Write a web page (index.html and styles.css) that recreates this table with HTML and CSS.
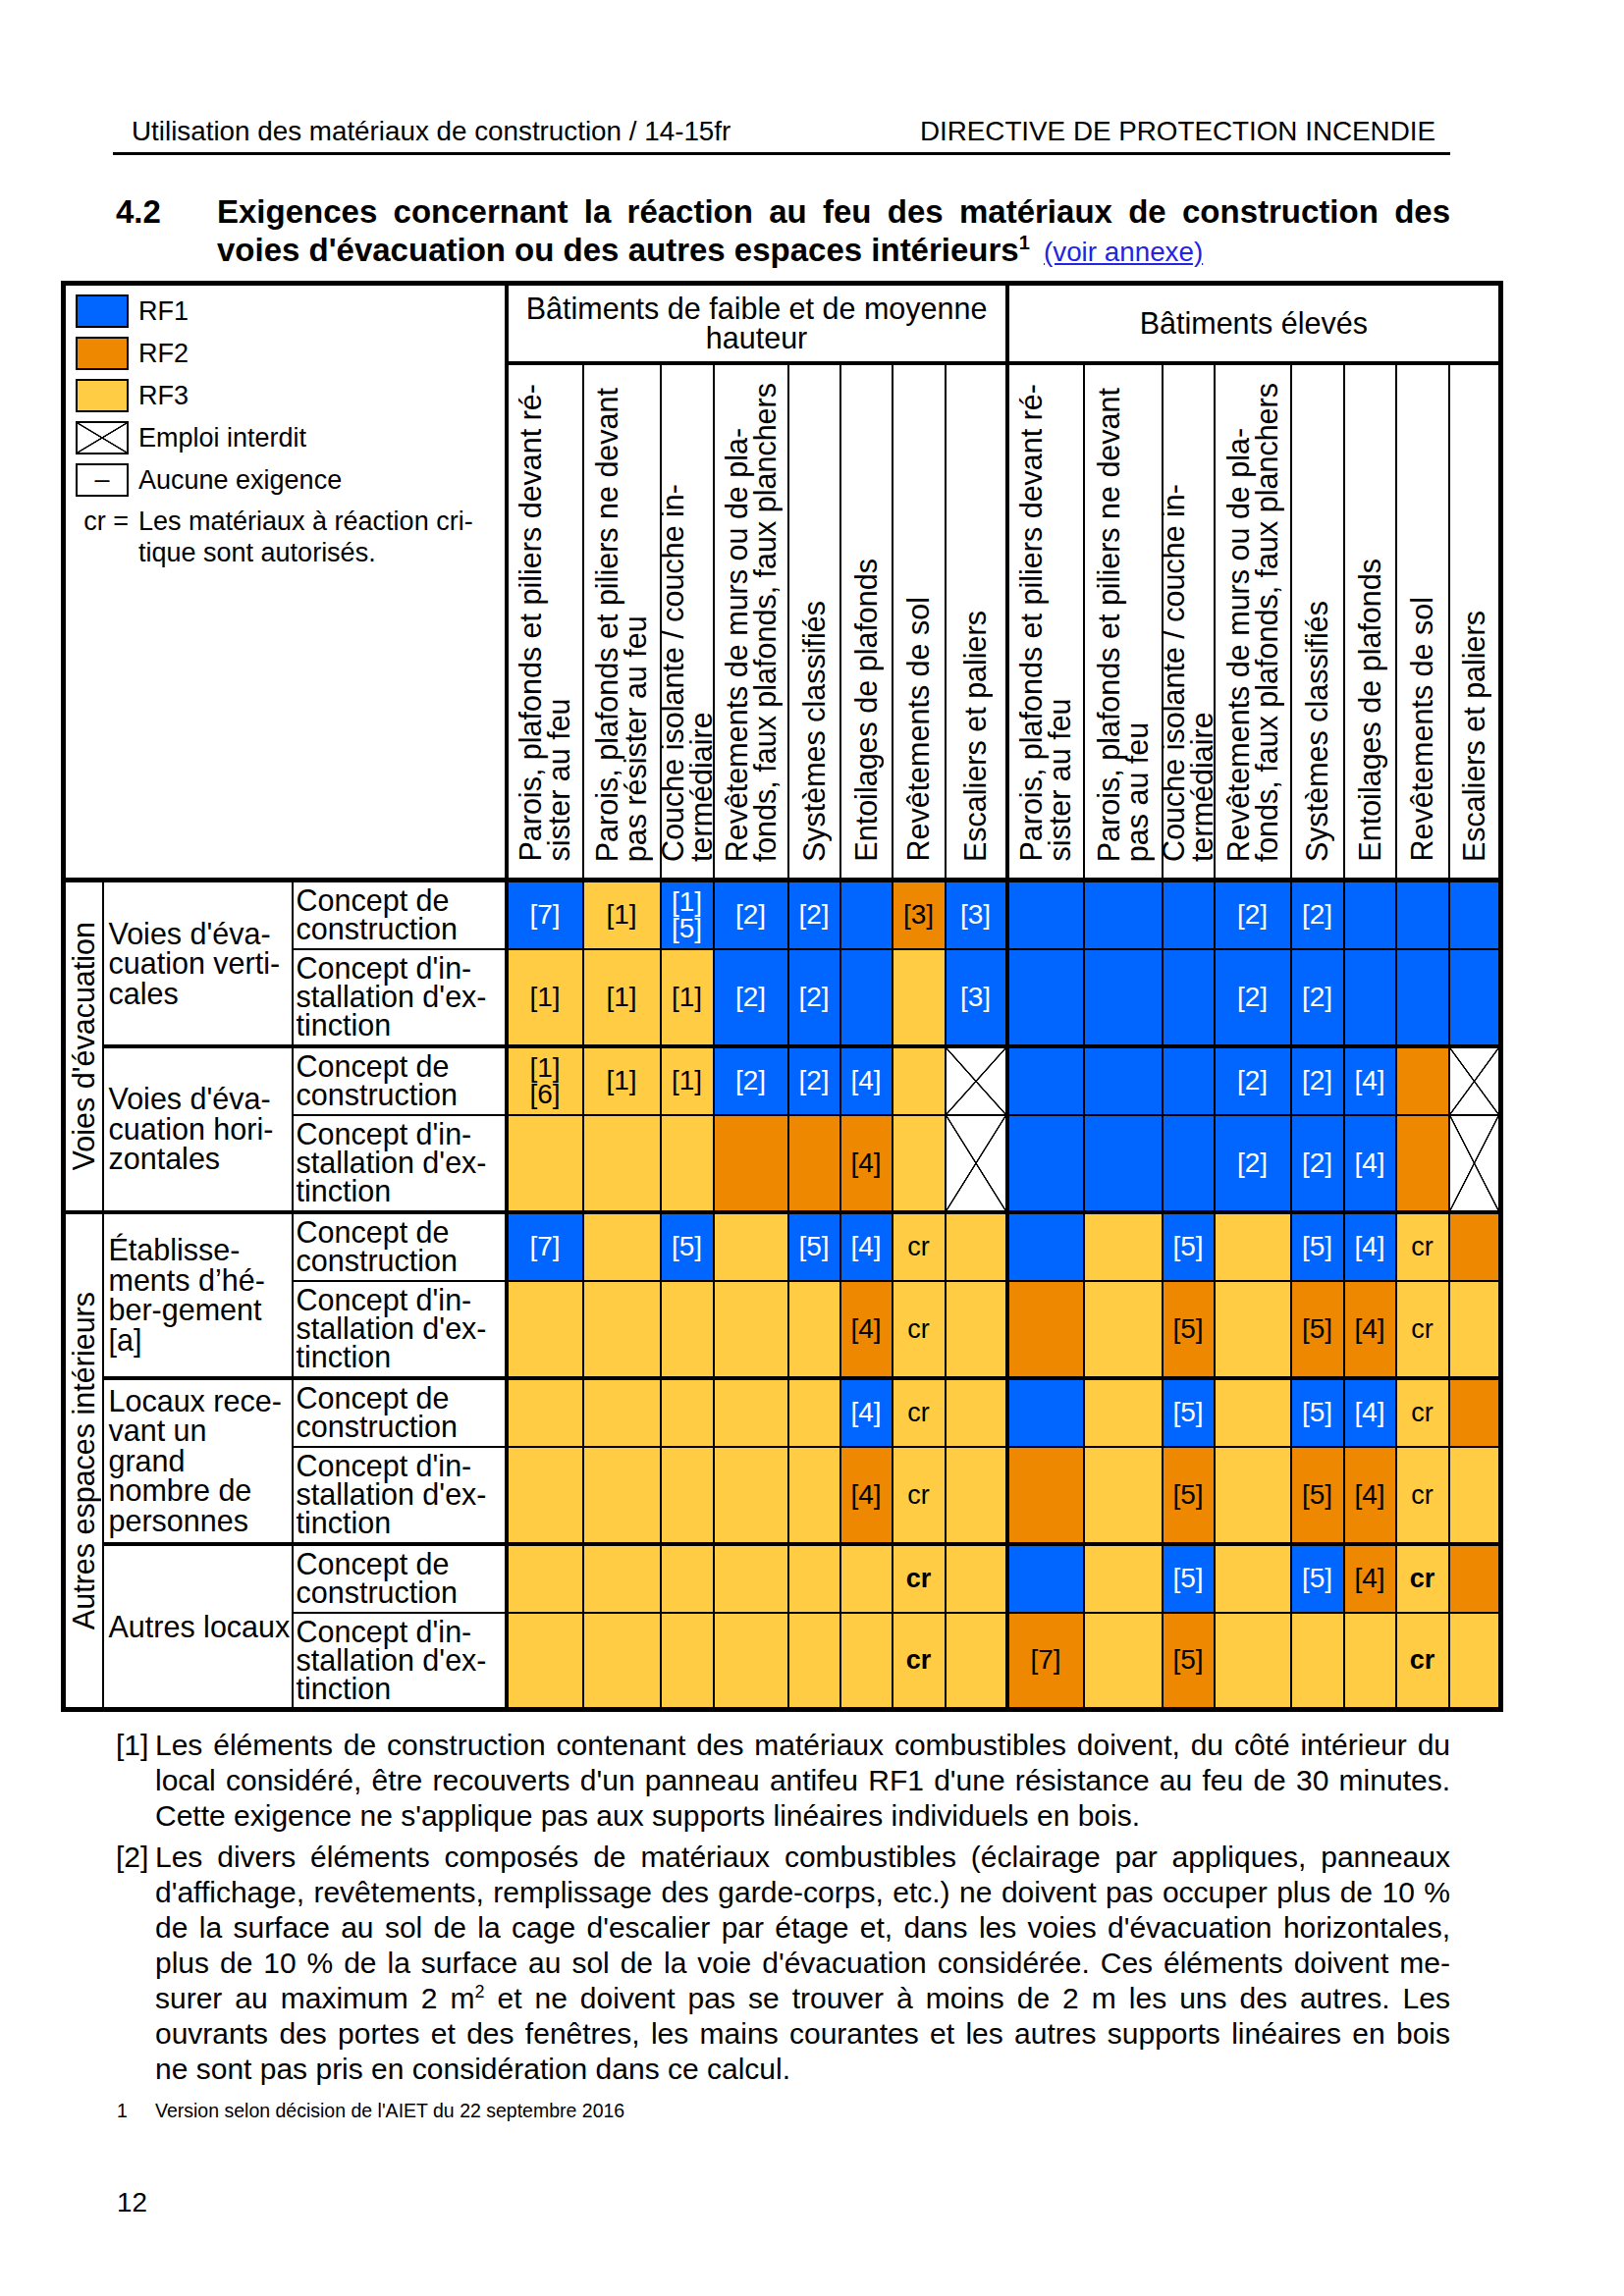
FILE: index.html
```html
<!DOCTYPE html>
<html lang="fr">
<head>
  <meta charset="UTF-8">
  <title>Utilisation des matériaux de construction - 4.2</title>
  <link rel="stylesheet" href="styles.css">
</head>
<body>
  <div class="page">
    <header class="doc-header">
      <span>Utilisation des matériaux de construction / 14-15fr</span>
      <span>DIRECTIVE DE PROTECTION INCENDIE</span>
    </header>

    <h2 class="section-title">
      <span class="num">4.2</span>
      <span class="text"><span class="jl">Exigences concernant la réaction au feu des matériaux de construction des</span>voies d'évacuation ou des autres espaces intérieurs<sup>1</sup> <a href="#annexe">(voir annexe)</a></span>
    </h2>

    <table class="req">
      <colgroup>
        <col style="width:40px"><col style="width:193px"><col style="width:218px">
        <col style="width:78px"><col style="width:79px"><col style="width:54px"><col style="width:76px">
        <col style="width:53px"><col style="width:53px"><col style="width:54px"><col style="width:63px">
        <col style="width:78px"><col style="width:80px"><col style="width:53px"><col style="width:78px">
        <col style="width:54px"><col style="width:53px"><col style="width:54px"><col style="width:53px">
      </colgroup>
      <thead>
        <tr class="h-top">
          <th class="legend-cell" rowspan="2" colspan="3">
            <div class="legend">
              <span class="sw b"></span><span>RF1</span>
              <span class="sw o"></span><span>RF2</span>
              <span class="sw y"></span><span>RF3</span>
              <span class="sw x"></span><span>Emploi interdit</span>
              <span class="sw none">–</span><span>Aucune exigence</span>
              <span class="cr-key">cr =</span><span class="cr-text">Les matériaux à réaction cri-<br>tique sont autorisés.</span>
            </div>
          </th>
          <th class="bld" colspan="8">Bâtiments de faible et de moyenne<br>hauteur</th>
          <th class="bld gs" colspan="8">Bâtiments élevés</th>
        </tr>
        <tr class="h-cols">
          <th><div class="vh"><span>Parois, plafonds et piliers devant ré-<br>sister au feu</span></div></th>
          <th><div class="vh"><span>Parois, plafonds et piliers ne devant<br>pas résister au feu</span></div></th>
          <th><div class="vh"><span>Couche isolante / couche in-<br>termédiaire</span></div></th>
          <th><div class="vh"><span>Revêtements de murs ou de pla-<br>fonds, faux plafonds, faux planchers</span></div></th>
          <th><div class="vh"><span>Systèmes classifiés</span></div></th>
          <th><div class="vh"><span>Entoilages de plafonds</span></div></th>
          <th><div class="vh"><span>Revêtements de sol</span></div></th>
          <th><div class="vh"><span>Escaliers et paliers</span></div></th>
          <th class="gs"><div class="vh"><span>Parois, plafonds et piliers devant ré-<br>sister au feu</span></div></th>
          <th><div class="vh"><span>Parois, plafonds et piliers ne devant<br>pas au feu</span></div></th>
          <th><div class="vh"><span>Couche isolante / couche in-<br>termédiaire</span></div></th>
          <th><div class="vh"><span>Revêtements de murs ou de pla-<br>fonds, faux plafonds, faux planchers</span></div></th>
          <th><div class="vh"><span>Systèmes classifiés</span></div></th>
          <th><div class="vh"><span>Entoilages de plafonds</span></div></th>
          <th><div class="vh"><span>Revêtements de sol</span></div></th>
          <th><div class="vh"><span>Escaliers et paliers</span></div></th>
        </tr>
      </thead>
      <tbody>
        <tr class="rc">
          <td class="sec-label" rowspan="4"><span class="vt">Voies d'évacuation</span></td>
          <td class="grp-label" rowspan="2">Voies d'éva-<br>cuation verti-<br>cales</td>
          <td class="sub">Concept de<br>construction</td>
          <td class="b">[7]</td><td class="y">[1]</td><td class="b two">[1]<br>[5]</td><td class="b">[2]</td>
          <td class="b">[2]</td><td class="b"></td><td class="o">[3]</td><td class="b">[3]</td>
          <td class="b gs"></td><td class="b"></td><td class="b"></td><td class="b">[2]</td>
          <td class="b">[2]</td><td class="b"></td><td class="b"></td><td class="b"></td>
        </tr>
        <tr class="ri">
          <td class="sub">Concept d'in-<br>stallation d'ex-<br>tinction</td>
          <td class="y">[1]</td><td class="y">[1]</td><td class="y">[1]</td><td class="b">[2]</td>
          <td class="b">[2]</td><td class="b"></td><td class="y"></td><td class="b">[3]</td>
          <td class="b gs"></td><td class="b"></td><td class="b"></td><td class="b">[2]</td>
          <td class="b">[2]</td><td class="b"></td><td class="b"></td><td class="b"></td>
        </tr>
        <tr class="rc grp">
          <td class="grp-label" rowspan="2">Voies d'éva-<br>cuation hori-<br>zontales</td>
          <td class="sub">Concept de<br>construction</td>
          <td class="y two">[1]<br>[6]</td><td class="y">[1]</td><td class="y">[1]</td><td class="b">[2]</td>
          <td class="b">[2]</td><td class="b">[4]</td><td class="y"></td><td class="x"></td>
          <td class="b gs"></td><td class="b"></td><td class="b"></td><td class="b">[2]</td>
          <td class="b">[2]</td><td class="b">[4]</td><td class="o"></td><td class="x"></td>
        </tr>
        <tr class="ri">
          <td class="sub">Concept d'in-<br>stallation d'ex-<br>tinction</td>
          <td class="y"></td><td class="y"></td><td class="y"></td><td class="o"></td>
          <td class="o"></td><td class="o">[4]</td><td class="y"></td><td class="x"></td>
          <td class="b gs"></td><td class="b"></td><td class="b"></td><td class="b">[2]</td>
          <td class="b">[2]</td><td class="b">[4]</td><td class="o"></td><td class="x"></td>
        </tr>
        <tr class="rc grp">
          <td class="sec-label" rowspan="6"><span class="vt">Autres espaces intérieurs</span></td>
          <td class="grp-label" rowspan="2">Établisse-<br>ments d’hé-<br>ber-gement<br>[a]</td>
          <td class="sub">Concept de<br>construction</td>
          <td class="b">[7]</td><td class="y"></td><td class="b">[5]</td><td class="y"></td>
          <td class="b">[5]</td><td class="b">[4]</td><td class="y cr">cr</td><td class="y"></td>
          <td class="b gs"></td><td class="y"></td><td class="b">[5]</td><td class="y"></td>
          <td class="b">[5]</td><td class="b">[4]</td><td class="y cr">cr</td><td class="o"></td>
        </tr>
        <tr class="ri">
          <td class="sub">Concept d'in-<br>stallation d'ex-<br>tinction</td>
          <td class="y"></td><td class="y"></td><td class="y"></td><td class="y"></td>
          <td class="y"></td><td class="o">[4]</td><td class="y cr">cr</td><td class="y"></td>
          <td class="o gs"></td><td class="y"></td><td class="o">[5]</td><td class="y"></td>
          <td class="o">[5]</td><td class="o">[4]</td><td class="y cr">cr</td><td class="y"></td>
        </tr>
        <tr class="rc grp">
          <td class="grp-label" rowspan="2">Locaux rece-<br>vant un<br>grand<br>nombre de<br>personnes</td>
          <td class="sub">Concept de<br>construction</td>
          <td class="y"></td><td class="y"></td><td class="y"></td><td class="y"></td>
          <td class="y"></td><td class="b">[4]</td><td class="y cr">cr</td><td class="y"></td>
          <td class="b gs"></td><td class="y"></td><td class="b">[5]</td><td class="y"></td>
          <td class="b">[5]</td><td class="b">[4]</td><td class="y cr">cr</td><td class="o"></td>
        </tr>
        <tr class="ri">
          <td class="sub">Concept d'in-<br>stallation d'ex-<br>tinction</td>
          <td class="y"></td><td class="y"></td><td class="y"></td><td class="y"></td>
          <td class="y"></td><td class="o">[4]</td><td class="y cr">cr</td><td class="y"></td>
          <td class="o gs"></td><td class="y"></td><td class="o">[5]</td><td class="y"></td>
          <td class="o">[5]</td><td class="o">[4]</td><td class="y cr">cr</td><td class="y"></td>
        </tr>
        <tr class="rc grp">
          <td class="grp-label" rowspan="2">Autres locaux</td>
          <td class="sub">Concept de<br>construction</td>
          <td class="y"></td><td class="y"></td><td class="y"></td><td class="y"></td>
          <td class="y"></td><td class="y"></td><td class="y cr strong">cr</td><td class="y"></td>
          <td class="b gs"></td><td class="y"></td><td class="b">[5]</td><td class="y"></td>
          <td class="b">[5]</td><td class="o">[4]</td><td class="y cr strong">cr</td><td class="o"></td>
        </tr>
        <tr class="ri">
          <td class="sub">Concept d'in-<br>stallation d'ex-<br>tinction</td>
          <td class="y"></td><td class="y"></td><td class="y"></td><td class="y"></td>
          <td class="y"></td><td class="y"></td><td class="y cr strong">cr</td><td class="y"></td>
          <td class="o gs">[7]</td><td class="y"></td><td class="o">[5]</td><td class="y"></td>
          <td class="y"></td><td class="y"></td><td class="y cr strong">cr</td><td class="y"></td>
        </tr>
      </tbody>
    </table>

    <div class="notes">
      <div class="note">
        <span class="ref">[1]</span>
        <p class="body"><span class="jl">Les éléments de construction contenant des matériaux combustibles doivent, du côté intérieur du</span><span class="jl">local considéré, être recouverts d'un panneau antifeu RF1 d'une résistance au feu de 30 minutes.</span>Cette exigence ne s'applique pas aux supports linéaires individuels en bois.</p>
      </div>
      <div class="note">
        <span class="ref">[2]</span>
        <p class="body"><span class="jl">Les divers éléments composés de matériaux combustibles (éclairage par appliques, panneaux</span><span class="jl">d'affichage, revêtements, remplissage des garde-corps, etc.) ne doivent pas occuper plus de 10&nbsp;%</span><span class="jl">de la surface au sol de la cage d'escalier par étage et, dans les voies d'évacuation horizontales,</span><span class="jl">plus de 10&nbsp;% de la surface au sol de la voie d'évacuation considérée. Ces éléments doivent me-</span><span class="jl">surer au maximum 2 m<sup>2</sup> et ne doivent pas se trouver à moins de 2 m les uns des autres. Les</span><span class="jl">ouvrants des portes et des fenêtres, les mains courantes et les autres supports linéaires en bois</span>ne sont pas pris en considération dans ce calcul.</p>
      </div>
    </div>

    <div class="footnote">
      <span class="ref">1</span>
      <span>Version selon décision de l'AIET du 22 septembre 2016</span>
    </div>

    <div class="page-num">12</div>
  </div>
</body>
</html>
```

FILE: styles.css
```css
body {
  margin: 0;
  background: #fff;
  color: #000;
  font-family: "Liberation Sans", Arial, Helvetica, sans-serif;
}
.page {
  width: 1654px;
}

/* running header */
.doc-header {
  display: flex;
  justify-content: space-between;
  box-sizing: border-box;
  width: 1362px;
  margin: 118px 0 0 115px;
  padding: 0 15px 5px 19px;
  border-bottom: 3px solid #000;
  font-size: 27.8px;
  line-height: 32px;
}

/* section title */
.section-title {
  display: flex;
  width: 1359px;
  margin: 38px 0 0 118px;
  font-size: 33px;
  line-height: 39px;
  font-weight: bold;
}
.section-title .num {
  flex: none;
  width: 103px;
}
.section-title .text {
  flex: 1;
}
.section-title sup {
  font-size: 20px;
  line-height: 0;
}
.section-title a {
  margin-left: 5px;
  font-weight: normal;
  font-size: 27.8px;
  color: #2323e0;
  text-decoration: underline;
}
.jl {
  display: block;
  white-space: nowrap;
  text-align: justify;
  text-align-last: justify;
}

/* requirements table */
.req {
  border-collapse: collapse;
  table-layout: fixed;
  width: 1469px;
  margin: 10px 0 0 62px;
  border: 5px solid #000;
  font-size: 30.5px;
}
.req th,
.req td {
  border: 2px solid #000;
  padding: 0;
  font-weight: normal;
  white-space: nowrap;
}
.req .gs {
  border-left-width: 4px;
}
.req .h-top {
  height: 81px;
}
.req .h-cols {
  height: 527px;
}
.req .h-cols th {
  border-bottom-width: 5px;
  vertical-align: bottom;
}
.req .bld {
  border-bottom-width: 4px;
  line-height: 30px;
  text-align: center;
  vertical-align: middle;
}
.req .rc {
  height: 70px;
}
.req .ri {
  height: 99px;
}
.req tr.grp > td {
  border-top-width: 4px;
}

/* legend */
.legend-cell {
  border-right-width: 4px !important;
  border-bottom-width: 5px !important;
  vertical-align: top;
  text-align: left;
}
.legend {
  display: grid;
  grid-template-columns: 54px auto;
  column-gap: 10px;
  row-gap: 9px;
  align-items: center;
  padding: 9px 0 0 10px;
  font-size: 27px;
  line-height: 32px;
}
.sw {
  box-sizing: border-box;
  height: 34px;
  border: 2px solid #000;
}
.sw.none {
  background: #fff;
  text-align: center;
  line-height: 28px;
}
.cr-key {
  align-self: start;
  text-align: right;
}
.cr-text {
  align-self: start;
}

/* rotated column headers */
.vh {
  display: flex;
  justify-content: center;
  align-items: flex-end;
  padding-bottom: 16px;
}
.vh span {
  writing-mode: vertical-rl;
  transform: rotate(180deg);
  line-height: 29px;
  text-align: left;
}

/* row labels */
.sec-label {
  text-align: center;
  vertical-align: middle;
}
.vt {
  display: inline-block;
  writing-mode: vertical-rl;
  transform: rotate(180deg);
  line-height: 34px;
  vertical-align: middle;
}
.grp-label {
  padding-left: 5px !important;
  line-height: 30.5px;
  vertical-align: middle;
}
.sub {
  padding-left: 3px !important;
  border-right-width: 4px !important;
  line-height: 29px;
  vertical-align: middle;
}

/* value cells */
.req td.b,
.req td.o,
.req td.y,
.req td.x {
  text-align: center;
  vertical-align: middle;
  font-size: 28px;
  line-height: 30px;
}
.req td.two {
  line-height: 27px;
}
.req td.cr {
  font-size: 27px;
}
.req td.strong {
  font-weight: bold;
}
.b {
  background: #0066ff;
  color: #fff;
}
.o {
  background: #ee8800;
}
.y {
  background: #ffcc44;
}
.x {
  background:
    linear-gradient(to top right, transparent calc(50% - 1px), #000 calc(50% - 0.5px), #000 calc(50% + 0.5px), transparent calc(50% + 1px)),
    linear-gradient(to bottom right, transparent calc(50% - 1px), #000 calc(50% - 0.5px), #000 calc(50% + 0.5px), transparent calc(50% + 1px)),
    #fff;
}

/* notes */
.notes {
  width: 1359px;
  margin: 16px 0 0 118px;
  font-size: 30px;
  line-height: 36px;
}
.note {
  display: flex;
}
.note + .note {
  margin-top: 6px;
}
.note .ref {
  flex: none;
  width: 40px;
}
.note .body {
  flex: 1;
  margin: 0;
}
.note sup {
  font-size: 18px;
  line-height: 0;
}
.footnote {
  display: flex;
  margin: 12px 0 0 119px;
  font-size: 19.5px;
  line-height: 24px;
}
.footnote .ref {
  width: 39px;
}
.page-num {
  margin: 66px 0 0 119px;
  font-size: 27.8px;
  line-height: 32px;
}
```
